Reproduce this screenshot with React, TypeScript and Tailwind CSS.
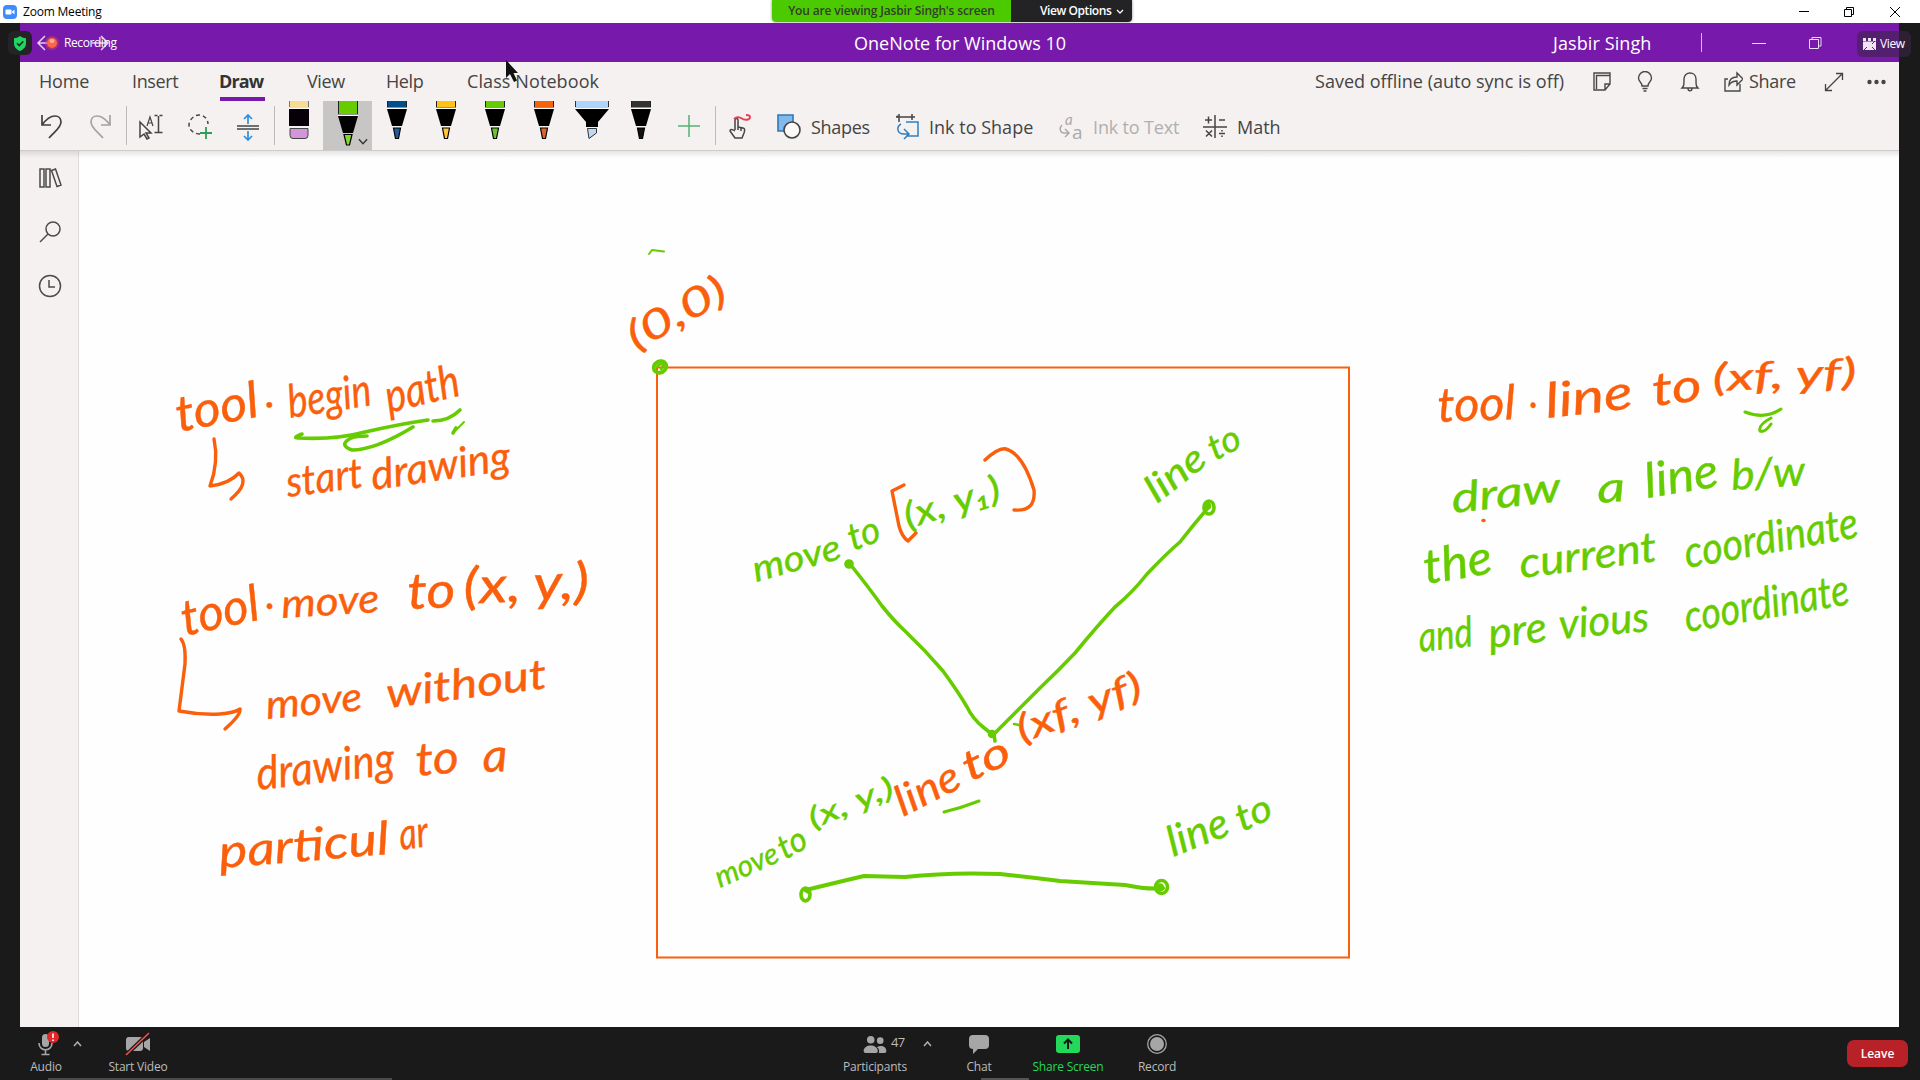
import React from "react";

const ORANGE = "#fa5f0c";
const GREEN = "#66cc00";

type Word = [text: string, x1: number, y1: number, x2: number, y2: number, size: number];

const orangeWords: Word[] = [
  ["tool", 179, 432, 261, 416, 50],
  [".", 266, 408, 276, 406, 44],
  ["begin", 290, 418, 373, 405, 46],
  ["path", 389, 413, 462, 395, 46],
  ["start", 288, 497, 364, 487, 42],
  ["drawing", 373, 490, 512, 470, 42],
  ["tool", 185, 636, 262, 619, 50],
  [".", 266, 609, 276, 608, 44],
  ["move", 282, 618, 380, 612, 40],
  ["to", 408, 609, 456, 607, 50],
  ["(x, y,)", 464, 604, 590, 598, 50],
  ["move", 267, 719, 363, 710, 40],
  ["without", 388, 708, 548, 688, 42],
  ["drawing", 258, 790, 396, 774, 46],
  ["to", 417, 776, 460, 772, 46],
  ["a", 483, 772, 508, 771, 46],
  ["particul", 220, 868, 390, 854, 46],
  ["ar", 401, 850, 430, 846, 44],
  ["(0,0)", 636, 351, 730, 299, 40],
  ["line", 903, 817, 964, 786, 42],
  ["to", 970, 782, 1014, 761, 42],
  ["(xf, yf)", 1022, 743, 1145, 696, 38],
  ["tool", 1438, 422, 1516, 419, 48],
  [".", 1530, 408, 1539, 407, 44],
  ["line", 1547, 418, 1634, 408, 48],
  ["to", 1654, 406, 1703, 400, 46],
  ["(xf, yf)", 1713, 391, 1857, 385, 38],
];

const greenWords: Word[] = [
  ["move", 756, 582, 843, 558, 36],
  ["to", 853, 551, 883, 540, 38],
  ["(x, y₁)", 908, 529, 1003, 499, 36],
  ["line", 1157, 504, 1209, 463, 38],
  ["to", 1215, 461, 1244, 446, 36],
  ["move", 720, 888, 781, 861, 30],
  ["to", 785, 860, 810, 846, 34],
  ["(x, y,)", 813, 829, 896, 795, 29],
  ["line", 1173, 857, 1232, 834, 42],
  ["to", 1242, 832, 1275, 817, 38],
  ["draw", 1453, 513, 1562, 501, 42],
  ["a", 1598, 503, 1626, 501, 42],
  ["line", 1647, 498, 1720, 486, 48],
  ["b/w", 1732, 490, 1806, 485, 42],
  ["the", 1426, 584, 1494, 573, 48],
  ["current", 1521, 578, 1658, 561, 42],
  ["coordinate", 1687, 568, 1860, 537, 44],
  ["and", 1420, 652, 1474, 646, 42],
  ["pre", 1490, 648, 1548, 641, 42],
  ["vious", 1560, 639, 1650, 631, 42],
  ["coordinate", 1687, 632, 1851, 604, 44],
];

function Words({ items, color }: { items: Word[]; color: string }) {
  return (
    <g fill={color} stroke={color} strokeWidth="0.4" fontFamily='"Lato", "Open Sans", sans-serif' fontStyle="italic">
      {items.map(([t, x1, y1, x2, y2, s], i) => (
        <text
          key={i}
          fontSize={s}
          textLength={Math.hypot(x2 - x1, y2 - y1)}
          lengthAdjust="spacingAndGlyphs"
          transform={`translate(${x1} ${y1}) rotate(${(Math.atan2(y2 - y1, x2 - x1) * 180) / Math.PI})`}
        >
          {t}
        </text>
      ))}
    </g>
  );
}

function Ink() {
  return (
    <svg className="block h-[876px] w-[1820px]" viewBox="79 151 1820 876" fill="none" strokeLinecap="round" strokeLinejoin="round">
      <rect x="657" y="367.5" width="692" height="590" stroke={ORANGE} strokeWidth="2" strokeLinejoin="miter" />
      <Words items={orangeWords} color={ORANGE} />
      <Words items={greenWords} color={GREEN} />
      <g stroke={ORANGE} strokeWidth="3.4">
        <path d="M214 439Q219 462 210 486Q229 484 239 473Q250 483 231 499" />
        <path d="M181 639Q186 645 185 664L179 711Q200 715 220 714Q234 713 240 709Q241 715 225 729" />
        <path d="M904 485L892 491L899 526Q902 537 908 541L916 533" />
        <path d="M985 460Q999 447 1006 449Q1023 454 1034 490Q1036 512 1014 510" />
        <path d="M1483 520.5h1" />
      </g>
      <g stroke={GREEN} strokeWidth="3.6">
        <path d="M302 434Q292 438 298 438Q335 440 365 432Q400 424 428 420" />
        <path d="M413 427Q375 450 352 450Q338 445 351 438Q356 436 367 436" />
        <path d="M433 421Q449 421 460 410" />
        <path d="M453 433L456 428" />
        <path d="M454 432L464 422" strokeWidth="2" />
        <path d="M649 254L652 250L664 251.500" strokeWidth="2" />
        <path d="M850 564Q870 589 882 606Q895 622 905 631Q925 650 943 671Q959 693 967 707Q973 719 983 727L993 735L1040 688Q1058 671 1075 653Q1098 625 1115 607Q1133 592 1147 574Q1167 553 1180 542Q1194 524 1207 509" />
        <path d="M806 890Q830 884 864 876L905 877Q950 872 1000 874Q1030 877 1060 881L1125 885Q1150 890 1163 888" strokeWidth="4" />
        <path d="M994 735L995 741" />
        <path d="M944 812Q961 808 979 801" strokeWidth="3" />
        <path d="M1745 412Q1765 420 1781 409M1771 418Q1758 425 1760 431Q1765 433 1771 424" strokeWidth="3" />
        <path d="M1014 724L1019 725" strokeWidth="2.500" />
        <ellipse cx="660" cy="367" rx="6.500" ry="5.500" strokeWidth="4" transform="rotate(-30 660 367)" />
        <path d="M657 367Q660 363 664 364L661 369" strokeWidth="2.500" />
        <circle cx="849" cy="564" r="3" fill={GREEN} />
        <circle cx="992" cy="734" r="2.500" fill={GREEN} />
        <ellipse cx="1209" cy="507.500" rx="5" ry="6.500" />
        <circle cx="1207" cy="506" r="2.500" fill={GREEN} />
        <ellipse cx="805.500" cy="894.500" rx="4.500" ry="6.500" />
        <path d="M805 890l3 2" />
        <ellipse cx="1161.500" cy="887" rx="6" ry="6.500" />
        <circle cx="1160" cy="887.500" r="2.500" fill={GREEN} />
      </g>
    </svg>
  );
}

function Pen({ color, tip, tall = false }: { color: string; tip: string; tall?: boolean }) {
  const d = tall ? 7 : 0;
  return (
    <svg className="h-[49px] w-5 shrink-0" viewBox="0 0 20 49">
      <rect x="0.500" y="-1" width="19" height={7.500 + d} fill={color} stroke="#222" strokeWidth="1" />
      <rect x="0" y={6.500 + d} width="20" height="1.500" fill="#fff" />
      <path d={tall ? "M0 15h20l-5 17H5Z" : "M0 8h20l-5 17H5Z"} fill="#000" />
      <path d={tall ? "M6 33.500h8l-2.500 10.500h-3Z" : "M6.500 27h7l-2 10.500h-3Z"} fill={tip} stroke="#000" strokeWidth="1.200" />
    </svg>
  );
}

function TitleBar() {
  return (
    <div className="flex h-[23px] shrink-0 items-center bg-white">
      <svg className="ml-[3px] size-[14px]" viewBox="0 0 14 14">
        <rect width="14" height="14" rx="4" fill="#3f8cff" />
        <rect x="2.500" y="4.500" width="6" height="5" rx="1" fill="#fff" />
        <path d="M9 6.500l2.500-1.700v4.400L9 7.500Z" fill="#fff" />
      </svg>
      <span className="ml-[6px] w-[749px] text-[12px] tracking-[-0.2px] text-black">Zoom Meeting</span>
      <div className="flex h-[22px] self-start overflow-hidden rounded-b-[4px] text-[12px] font-semibold shadow-[0_0_3px_#888]">
        <div className="flex w-[239px] items-center justify-center whitespace-nowrap bg-[#4cca00] tracking-[-0.15px] text-[#31402b]">You are viewing Jasbir Singh's screen</div>
        <div className="flex w-[121px] items-center bg-[#232326] pl-[29px] tracking-[-0.42px] text-white">
          View Options
          <svg className="ml-[5px] h-[5px] w-2" viewBox="0 0 8 5" fill="none" stroke="#fff" strokeWidth="1.300"><path d="M1 1l3 3 3-3" /></svg>
        </div>
      </div>
      <svg className="ml-auto mr-[19px] h-3 w-[103px]" viewBox="0 0 103 12" fill="none" stroke="#000">
        <path d="M1 5.500h10M46.500 3.500h7v7h-7ZM48.500 3v-1.500h7v7H54M92 1l10 10M102 1L92 11" />
      </svg>
    </div>
  );
}

function PurpleBar() {
  return (
    <div className="relative flex h-[39px] shrink-0 items-center bg-[#7719aa] text-white">
      <svg className="ml-[16px] h-5 w-[77px] shrink-0" viewBox="0 0 77 20" fill="none" stroke="#e5cff0" strokeWidth="1.500">
        <path d="M9 3L2 10l7 7M2 10h9M56 10h16M65 3l7 7-7 7" />
        <circle cx="16" cy="10" r="7" fill="#d94a55" fillOpacity=".45" stroke="none" />
        <circle cx="16" cy="10" r="5" fill="#ff6448" stroke="none" />
        <ellipse cx="16" cy="8" rx="2.500" ry="2" fill="#ffae9c" stroke="none" />
      </svg>
      <span className="absolute left-[44px] top-[11px] text-[12px] tracking-[-0.42px]">Recording</span>
      <span className="ml-[741px] w-[698px] whitespace-nowrap pt-[2px] text-[18px] tracking-[0.03px]">OneNote for Windows 10</span>
      <span className="ml-px w-[148px] whitespace-nowrap pt-[2px] text-[18px] tracking-[0.1px]">Jasbir Singh</span>
      <div className="h-[19px] w-px bg-[#dcb6ee]" />
      <svg className="ml-[50px] h-4 w-[72px]" viewBox="0 0 72 16" fill="none" stroke="#ecdcf5">
        <path d="M0 8.500h14M57.500 4.500h9v9h-9ZM60 4V2.500h9V11h-2" />
      </svg>
      <div className="absolute -left-3 top-2 flex h-6 w-6 items-center justify-center rounded-[6px] bg-[#252228]">
        <svg className="h-[15px] w-[14px]" viewBox="0 0 14 15"><path d="M7 0C5 1.500 3 2.200 1 2.200V7c0 4 2.500 6.500 6 8 3.500-1.500 6-4 6-8V2.200C11 2.200 9 1.500 7 0Z" fill="#1ed760" /><path d="M4 7.300l2.200 2.200L10.200 5.400" fill="none" stroke="#1c2a22" strokeWidth="1.600" /></svg>
      </div>
      <div className="absolute -right-3 top-2 flex h-[26px] w-[54px] items-center rounded-[6px] bg-[#3a2448]/60 pl-[6px] text-[12px] tracking-[-0.35px]">
        <svg className="mr-[3px] h-[13px] w-[14px]" viewBox="0 0 14 13" fill="#efe3f5"><path d="M0 0h3v3H0ZM5 0h3v3H5ZM10 0h3v3h-3ZM0 3.500h13V12H0Z" /><path d="M1 12l3-3M12 12L9 9M12 3L9 6" stroke="#50306a" /></svg>
        View
      </div>
    </div>
  );
}

function Tabs() {
  return (
    <div className="relative flex h-[39px] shrink-0 items-center whitespace-nowrap text-[18px] text-[#444]">
      <span className="ml-[19px] w-[93px] tracking-[-0.2px]">Home</span>
      <span className="w-[87px] tracking-[-0.35px]">Insert</span>
      <span className="relative w-[88px] font-bold tracking-[-0.85px] text-[#333]">
        Draw
        <span className="absolute -bottom-[6px] left-[1px] h-[4px] w-[45px] bg-[#7719aa]" />
      </span>
      <span className="w-[79px] tracking-[-0.4px]">View</span>
      <span className="w-[81px] tracking-[-0.4px]">Help</span>
      <span className="tracking-[0.1px]">Class Notebook</span>
      <span className="ml-auto w-[277px] tracking-[0.01px]">Saved offline (auto sync is off)</span>
      <svg className="h-[22px] w-[150px] shrink-0 translate-x-px" viewBox="0 0 150 22" fill="none" stroke="#484848" strokeWidth="1.400">
        <path d="M1 2h16v11l-5 6H1ZM3 4.500h14M3.500 4v14M17 13h-5v6" />
        <path d="M49 15c0-4-3.500-4-3.500-8a6.500 6.500 0 0 1 13 0c0 4-3.500 4-3.500 8ZM49.500 17.500h5M50.500 20h3" />
        <path d="M89 17c2-2 2-3 2-9 0-8 12-8 12 0 0 6 0 7 2 9ZM95 17.500c0 3 4 3 4 0" />
        <path d="M135 8h-3v12h15v-7M136 14c0-6 3-8 8-8V2l6 6-6 6v-4c-4 0-6 1-8 4Z" />
      </svg>
      <span className="ml-[7px] w-[75px] tracking-[-0.3px]">Share</span>
      <svg className="mr-[13px] h-5 w-[62px] shrink-0" viewBox="0 0 62 20" fill="none" stroke="#444" strokeWidth="1.300">
        <path d="M2 18L18 2M12 1.500h6.500V8M1.500 12v6.500H8" />
        <g fill="#444" stroke="none"><circle cx="45.500" cy="10" r="2.200" /><circle cx="52.500" cy="10" r="2.200" /><circle cx="59.500" cy="10" r="2.200" /></g>
      </svg>
      <svg className="absolute left-[485px] -top-[2px] h-[24px] w-[16px]" viewBox="0 0 16 24"><path d="M1 0v18l4-4 4 8 3-1.500L8.500 13H13Z" fill="#111" /></svg>
    </div>
  );
}

function Sep() {
  return <div className="mt-[5px] h-[39px] w-px shrink-0 bg-[#bdbbba]" />;
}

function Toolbar() {
  return (
    <div className="flex h-[49px] shrink-0 items-start whitespace-nowrap text-[18px] text-[#444]">
      <svg className="ml-[20px] mt-[12px] h-[26px] w-[72px] shrink-0" viewBox="0 0 72 26" fill="none" strokeWidth="1.700">
        <path d="M2 2v10h9M2 12C7 5 11 3 15 3c4 0 6 3 6 6 0 6-7 10-12 16" stroke="#404040" />
        <path d="M70 2v10h-9M70 12C65 5 61 3 57 3c-4 0-6 3-6 6 0 6 7 10 12 16" stroke="#a3a3a3" />
      </svg>
      <div className="ml-[14px]"><Sep /></div>
      <svg className="ml-[12px] mt-[12px] h-[28px] w-[122px] shrink-0" viewBox="0 0 122 28" fill="none" stroke="#444" strokeWidth="1.500">
        <path d="M1 9v15l4-3 3 5 2-1-3-5h5Z" />
        <path d="M8 13l3-9 3 9M9 10h4" strokeWidth="1.200" />
        <path d="M15.500 2.500h3M20.500 2.500h3M19.500 3v16M15.500 19.500h8" />
        <path d="M61 21c-6 0-11-4-11-9s5-10 10-10 9 4 9 9" strokeDasharray="4 3" />
        <path d="M67 14v12M61 20h12" stroke="#2f9e57" strokeWidth="1.800" />
        <path d="M98 13h22M98 16h22" />
        <path d="M109 11V2M105 6l4-4 4 4M109 18v9M105 23l4 4 4-4" stroke="#2f8edb" strokeWidth="1.700" />
      </svg>
      <div className="ml-[13px]"><Sep /></div>
      <svg className="ml-[14px] h-[49px] w-5 shrink-0" viewBox="0 0 20 49">
        <rect x="0.500" y="-1" width="19" height="7.500" fill="#f8dc90" stroke="#777" /><path d="M0 7h20" stroke="#fff" strokeWidth="1.500" />
        <path d="M0 8h20v17H0Z" fill="#080008" />
        <path d="M1 27.500h18v7q0 3-3 3H4q-3 0-3-3Z" fill="#d195d8" stroke="#444" />
      </svg>
      <div className="ml-[14px] flex h-[49px] w-[49px] bg-[#c8c6c4] pl-[15px]">
        <Pen color="#66cc00" tip="#84d928" tall />
        <svg className="mt-[37px] h-[8px] w-[10px]" viewBox="0 0 11 8" fill="none" stroke="#333" strokeWidth="1.500"><path d="M1 1l4.500 5L10 1" /></svg>
      </div>
      <div className="ml-[15px] flex gap-[29px]">
        <Pen color="#004f8c" tip="#1f5c98" />
        <Pen color="#ffc114" tip="#ffc83a" />
        <Pen color="#66cc00" tip="#6cc530" />
        <Pen color="#f6630d" tip="#e0642a" />
      </div>
      <svg className="ml-[21px] h-[49px] w-[34px] shrink-0" viewBox="0 0 34 49">
        <rect x="0.500" y="-1" width="33" height="7.500" fill="#aed4fb" stroke="#333" /><path d="M0 7h34" stroke="#fff" strokeWidth="1.500" />
        <path d="M0 8h34L23 21v5H11v-5Z" fill="#000" />
        <path d="M12.500 27.500h9V32l-7.500 5.500Z" fill="#bcd9f5" stroke="#333" />
      </svg>
      <div className="ml-[22px]"><Pen color="#333333" tip="#111111" /></div>
      <svg className="ml-[27px] mt-[14px] size-[22px]" viewBox="0 0 22 22" stroke="#55b078" strokeWidth="1.500"><path d="M11 0v22M0 11h22" /></svg>
      <div className="ml-[15px]"><Sep /></div>
      <svg className="ml-[12px] mt-[12px] h-[27px] w-[24px] shrink-0" viewBox="0 0 24 27" fill="none" stroke="#444" strokeWidth="1.500">
        <path d="M7 17V7c0-2 3-2 3 0v7l5 1c2 .5 2 2 1 5l-2 5H7l-5-7c0-2 2-2 5 0M10 17v-4M13 18v-4" />
        <path d="M6 6c3-3 5-2 7-1 4 3 9 2 9-1 0-2-2-2-4-2" stroke="#e83e58" strokeWidth="1.900" />
      </svg>
      <svg className="ml-[25px] mt-[13px] h-[25px] w-[24px] shrink-0" viewBox="0 0 24 25" strokeWidth="1.600">
        <path d="M1 1h15v7L8 17H1Z" fill="#83b9ea" stroke="#2d78b8" /><circle cx="15" cy="16" r="8" fill="#faf9f8" stroke="#444" />
      </svg>
      <span className="ml-[10px] mt-[13px] w-[85px] tracking-[-0.3px]">Shapes</span>
      <svg className="mt-[13px] h-[26px] w-[24px] shrink-0" viewBox="0 0 24 26" fill="none" strokeWidth="1.500">
        <path d="M0 3h19M3 0v8M16 0v6M0 3l2-1" stroke="#444" />
        <path d="M10 8h12v14H10M5 10C0 13 1 20 8 20h4M8 15l5 5-5 5" stroke="#2f7fc2" />
      </svg>
      <span className="ml-[9px] mt-[13px] w-[130px] tracking-[0.01px]">Ink to Shape</span>
      <div className="relative mt-[12px] h-[27px] w-[25px] shrink-0 text-[#aaa]">
        <svg className="size-full" viewBox="0 0 25 27" fill="none" stroke="#aaa" strokeWidth="1.500">
          <path d="M3 12C0 15 1 20 5 20h4M6 16l4 4-4 4" />
        </svg>
        <span className="absolute left-[6px] -top-[4px] font-['Lato'] text-[15px] italic leading-[20px]">a</span>
        <span className="absolute left-[13px] top-[8px] text-[19px] leading-[22px]">a</span>
      </div>
      <span className="ml-[9px] mt-[13px] w-[110px] tracking-[-0.15px] text-[#b1afae]">Ink to Text</span>
      <svg className="mt-[13px] h-[26px] w-[24px] shrink-0" viewBox="0 0 24 26" fill="none" stroke="#444" strokeWidth="1.500">
        <path d="M12 1v23M0 13h24M2 6h7M5.500 2.500v7M16 6h6M3 16.500l6 6M9 16.500l-6 6M16 19.500h6M19 16v1.500M19 21.500v1.500" />
      </svg>
      <span className="ml-[10px] mt-[13px]">Math</span>
    </div>
  );
}

function SideRail() {
  return (
    <div className="flex w-[59px] shrink-0 flex-col items-center border-r border-[#dddbdb] bg-[#f4f1f0] pl-[2px]">
      <svg className="mt-[16px] h-[22px] w-[24px]" viewBox="0 0 24 22" fill="none" stroke="#4b4b4b" strokeWidth="1.500">
        <path d="M2 2h4v18H2ZM8 2h4v18H8ZM13.500 3.500l4-1.500 5.500 16-4 1.500Z" />
      </svg>
      <svg className="mt-[31px] h-[24px] w-[22px]" viewBox="0 0 22 24" fill="none" stroke="#4b4b4b" strokeWidth="1.500">
        <circle cx="14" cy="9" r="7" /><path d="M9 14l-8 8" />
      </svg>
      <svg className="mt-[30px] size-[24px]" viewBox="0 0 24 24" fill="none" stroke="#4b4b4b" strokeWidth="1.500">
        <circle cx="12" cy="12" r="10.500" /><path d="M11 6v7h6" />
      </svg>
    </div>
  );
}

function Caret() {
  return <svg className="mt-[14px] h-[6px] w-[9px] shrink-0" viewBox="0 0 9 6" fill="none" stroke="#b0b0b0" strokeWidth="1.500"><path d="M1 5l3.500-4L8 5" /></svg>;
}

function BarItem({ label, icon, box, green = false }: { label: string; icon: React.ReactNode; box: string; green?: boolean }) {
  return (
    <div className={"flex h-full shrink-0 flex-col items-center whitespace-nowrap " + box}>
      <div className="mt-[5px] flex h-[24px] items-center">{icon}</div>
      <span className={green ? "mt-[3px] text-[12px] leading-4 tracking-[-0.2px] text-[#23d959]" : "mt-[3px] text-[12px] leading-4 tracking-[-0.2px] text-[#bcbcbc]"}>{label}</span>
    </div>
  );
}

function ZoomBar() {
  return (
    <div className="relative flex h-[53px] shrink-0 bg-[#1a1a1a]">
      <BarItem label="Audio" box="ml-[26px] w-[40px]" icon={
        <svg className="h-6 w-[24px] translate-x-[2px] overflow-visible" viewBox="0 0 24 24" fill="none" stroke="#a6a6a6" strokeWidth="1.600">
          <rect x="6" y="2" width="7" height="13" rx="3.500" fill="#a6a6a6" stroke="none" /><path d="M3 11c0 9 13 9 13 0M9.500 18v4M5.500 22.500h8" />
          <circle cx="17" cy="5" r="6" fill="#e02828" stroke="none" /><path d="M17 1.500v4.500M17 7.500v1.500" stroke="#fff" />
        </svg>} />
      <div className="ml-[7px]"><Caret /></div>
      <BarItem label="Start Video" box="ml-[26px] w-[60px]" icon={
        <svg className="h-6 w-[26px]" viewBox="0 0 26 24">
          <rect x="1" y="5" width="17" height="14" rx="3" fill="#a6a6a6" /><path d="M19 10l6-4v13l-6-4Z" fill="#a6a6a6" />
          <path d="M1 23L24 1" stroke="#1a1a1a" strokeWidth="4" /><path d="M1 23L24 1" stroke="#f0524f" strokeWidth="1.600" />
        </svg>} />
      <BarItem label="Participants" box="ml-[676px] w-[62px]" icon={
        <div className="flex w-[42px] translate-x-[9px] items-start text-[13px] leading-[14px] text-[#bcbcbc]">
          <svg className="h-[18px] w-[24px] shrink-0" viewBox="0 0 24 19" fill="#a6a6a6">
            <circle cx="7.500" cy="5" r="4" /><circle cx="17.500" cy="6" r="3.500" /><path d="M0 17c0-8 15-8 15 0q0 2-2 2H2q-2 0-2-2ZM16 19c1-3 0-5-2-6 4-3 10-1 10 4q0 2-2 2Z" />
          </svg>
          <span className="ml-[4px] tracking-[-0.7px]">47</span>
        </div>} />
      <div className="ml-[17px]"><Caret /></div>
      <BarItem label="Chat" box="ml-[34px] w-[26px]" icon={
        <svg className="h-[19px] w-[20px]" viewBox="0 0 20 19" fill="#a6a6a6"><path d="M4 0h12q4 0 4 4v6q0 4-4 4h-7l-5 5v-5q-4 0-4-4V4q0-4 4-4Z" /></svg>} />
      <BarItem label="Share Screen" box="ml-[40px] w-[72px]" green icon={
        <svg className="h-[18px] w-6" viewBox="0 0 24 18"><rect width="24" height="18" rx="3" fill="#23d959" /><path d="M12 14V5M8 8.500l4-4 4 4" fill="none" stroke="#1a1a1a" strokeWidth="2" /></svg>} />
      <BarItem label="Record" box="ml-[33px] w-[40px]" icon={
        <svg className="size-5" viewBox="0 0 20 20"><circle cx="10" cy="10" r="9.300" fill="none" stroke="#a6a6a6" strokeWidth="1.300" /><circle cx="10" cy="10" r="7" fill="#a6a6a6" /></svg>} />
      <div className="ml-auto mr-[12px] mt-[13px] flex h-[27px] w-[61px] items-center justify-center rounded-[7px] bg-[#b82127] text-[12px] font-semibold text-white">Leave</div>
      <div className="absolute bottom-0 left-[48px] h-[2px] w-[344px] bg-[#4b4b4b]" />
      <div className="absolute bottom-0 left-[981px] h-[2px] w-[48px] bg-[#555]" />
    </div>
  );
}

export default function App() {
  return (
    <div className="flex h-[1080px] w-[1920px] flex-col overflow-hidden bg-[#1a1a1a] font-['Open_Sans','Noto_Sans',sans-serif]">
      <TitleBar />
      <div className="ml-[20px] mr-[21px] flex h-[1004px] shrink-0 flex-col bg-[#f4f1f0]">
        <PurpleBar />
        <Tabs />
        <Toolbar />
        <div className="relative flex h-[877px] border-t border-[#cfcdcc]">
          <SideRail />
          <div className="w-[1820px] bg-[#fefefe]"><Ink /></div>
          <div className="absolute inset-x-0 top-0 h-[7px] bg-linear-to-b from-black/10 to-transparent" />
        </div>
      </div>
      <ZoomBar />
    </div>
  );
}
